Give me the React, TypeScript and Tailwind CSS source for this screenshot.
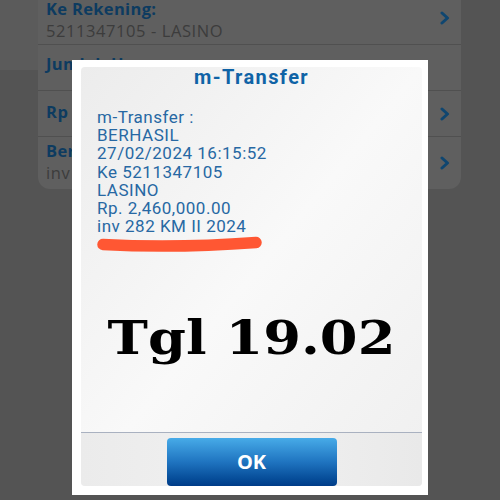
export default function App() {
  const Chevron = () => (
    <svg width="10" height="14" viewBox="0 0 10 14" className="shrink-0">
      <polyline points="2,2 7.5,7 2,12" fill="none" stroke="#0f4670" strokeWidth="3" strokeLinecap="round" strokeLinejoin="round" />
    </svg>
  );
  return (
    <div className="relative w-[500px] h-[500px] overflow-hidden bg-[#545454]">
      <div className="absolute left-0 top-0 w-[38px] h-[70px] bg-[#5b5b5b]" />
      <div className="relative ml-[38px] w-[423px] -mt-[8px] bg-[#5f5f5f] rounded-b-[12px] flex flex-col font-['Open_Sans',sans-serif] text-[16.5px] leading-[22px] tracking-[0.035em]">
        <div className="h-[53px] border-b border-[#505050] flex items-center justify-between pl-[8px] pr-[11px]">
          <div className="pt-[3px]">
            <div className="font-bold text-[#0d3b60] tracking-[0.02em]">Ke Rekening:</div>
            <div className="text-[#3c3c3c]">5211347105 - LASINO</div>
          </div>
          <Chevron />
        </div>
        <div className="h-[46px] border-b border-[#505050] flex items-start pl-[8px] pt-[8px]">
          <div className="font-bold text-[#0d3b60] tracking-[0.02em]">Jumlah Uang</div>
        </div>
        <div className="h-[46px] border-b border-[#505050] flex items-center justify-between pl-[8px] pr-[11px]">
          <div className="font-bold text-[#0d3b60] -mt-[4px]">Rp</div>
          <Chevron />
        </div>
        <div className="h-[52px] flex items-center justify-between pl-[8px] pr-[11px]">
          <div className="-mt-[2px]">
            <div className="font-bold text-[#0d3b60] tracking-[0.02em]">Berita</div>
            <div className="text-[#3c3c3c]">inv 282 KM II 2024</div>
          </div>
          <Chevron />
        </div>
      </div>

      <div className="absolute left-[72px] top-[60px] w-[356px] h-[435px] bg-white pt-[7px] pl-[9px] pr-[6px] pb-[9px]">
        <div className="h-full flex flex-col rounded-[4px] bg-gradient-to-br from-[#ececec] via-[#f9f9f9] to-[#efefef] overflow-hidden font-['Roboto',sans-serif]">
          <div className="text-center font-bold text-[#0f63a6] text-[20px] leading-[20px] tracking-[0.07em]">m-Transfer</div>
          <div className="mt-[21px] pl-[16px] text-[#2768a3] text-[17px] leading-[18.2px] tracking-[0.03em]">
            <div>m-Transfer :</div>
            <div>BERHASIL</div>
            <div>27/02/2024 16:15:52</div>
            <div>Ke 5211347105</div>
            <div>LASINO</div>
            <div>Rp. 2,460,000.00</div>
            <div>inv 282 KM II 2024</div>
          </div>
          <svg width="200" height="18" viewBox="0 0 200 18" className="ml-[12px] block">
            <path d="M10 9.5 Q 82 13.5 163 7.5" fill="none" stroke="#ff5733" strokeWidth="11.5" strokeLinecap="round" />
          </svg>
          <div className="mt-[62px] text-center font-['DejaVu_Serif',serif] font-bold text-[46px] leading-[46px] text-black scale-x-[1.18]">Tgl 19.02</div>
          <div className="flex-1" />
          <div className="h-px bg-[#a9b1c0]" />
          <div className="h-[53px] bg-gradient-to-r from-[#ebebeb] via-[#f1f1f1] to-[#e9e9e9] flex justify-center pt-[5px]">
            <div className="w-[170px] h-[48px] rounded-[4px] bg-gradient-to-b from-[#47abe8] via-[#1f74c0] to-[#003c88] flex items-center justify-center text-white font-bold text-[20px] font-['Open_Sans',sans-serif]">OK</div>
          </div>
        </div>
      </div>
    </div>
  );
}
